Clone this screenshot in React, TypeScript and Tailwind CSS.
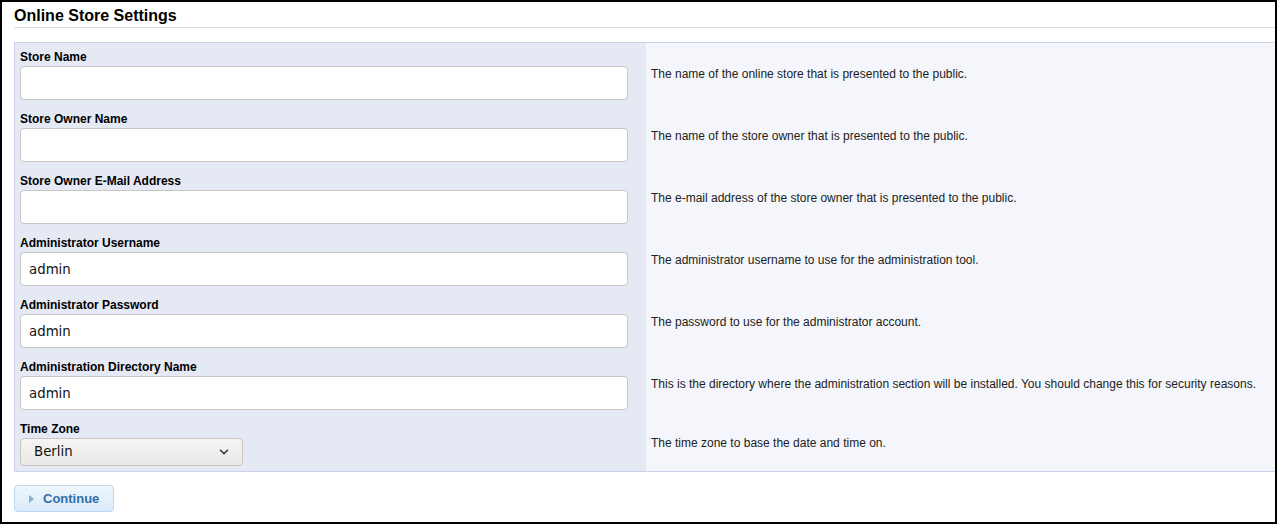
import { ChevronDown } from 'lucide-react';

const fields = [
  { label: 'Store Name', value: '', help: 'The name of the online store that is presented to the public.' },
  { label: 'Store Owner Name', value: '', help: 'The name of the store owner that is presented to the public.' },
  { label: 'Store Owner E-Mail Address', value: '', help: 'The e-mail address of the store owner that is presented to the public.' },
  { label: 'Administrator Username', value: 'admin', help: 'The administrator username to use for the administration tool.' },
  { label: 'Administrator Password', value: 'admin', help: 'The password to use for the administrator account.' },
  {
    label: 'Administration Directory Name',
    value: 'admin',
    help: 'This is the directory where the administration section will be installed. You should change this for security reasons.',
  },
];

export default function App() {
  return (
    <div className="w-[1277px] h-[524px] overflow-hidden border-2 border-black bg-white font-['Liberation_Sans',Arial,sans-serif] text-[#111]">
      {/* Heading */}
      <div className="pl-3">
        <h1 className="h-[26px] pt-[4px] text-[16px] leading-[20px] font-bold text-black border-b border-[#dcdcdc]">
          Online Store Settings
        </h1>
      </div>

      {/* Settings table */}
      <div className="mt-[14px] ml-3 border-t border-b border-l border-[#c9d2e8]">
        {fields.map((f) => (
          <div key={f.label} className="flex">
            <div className="w-[631px] shrink-0 bg-[#e5e9f4] px-[5px] pt-[6px] pb-[5px]">
              <div className="mb-px text-[12px] leading-[16px] font-bold text-black">{f.label}</div>
              <input
                readOnly
                value={f.value}
                className="block w-[608px] h-[34px] rounded-[4px] border border-[#c9c5c0] bg-white px-2 text-[13.33px] font-['DejaVu_Sans',sans-serif] text-[#111] outline-none"
              />
            </div>
            <div className="flex-1 flex items-center bg-[#f4f6fb] pl-[5px] text-[12px] leading-[15px] text-[#222]">
              {f.help}
            </div>
          </div>
        ))}
        <div className="flex">
          <div className="w-[631px] shrink-0 bg-[#e5e9f4] px-[5px] pt-[6px] pb-[5px]">
            <div className="mb-px text-[12px] leading-[16px] font-bold text-black">Time Zone</div>
            <div className="flex items-center justify-between w-[223px] h-[28px] rounded-[4px] border border-[#c9c5c0] bg-gradient-to-b from-[#f5f4f3] to-[#ebe9e7] pl-[13px] pr-[11px] font-['DejaVu_Sans',sans-serif] text-[13.33px] text-[#111]">
              <span>Berlin</span>
              <ChevronDown className="w-[14px] h-[14px] text-[#333]" strokeWidth={2.6} />
            </div>
          </div>
          <div className="flex-1 flex items-center bg-[#f4f6fb] pl-[5px] text-[12px] leading-[15px] text-[#222]">
            The time zone to base the date and time on.
          </div>
        </div>
      </div>

      {/* Continue button */}
      <div className="ml-3 mt-[13px]">
        <button className="flex items-center h-[27px] w-[100px] rounded-[4px] border border-[#bcd7ee] bg-gradient-to-b from-[#eef6fd] to-[#dbebfa] pl-[14px] text-[13px] font-bold text-[#2f6ea8]">
          <svg width="5" height="8" viewBox="0 0 5 8" className="mr-[9px]">
            <path d="M0 0 L5 4 L0 8 Z" fill="#86afd3" />
          </svg>
          Continue
        </button>
      </div>
    </div>
  );
}
